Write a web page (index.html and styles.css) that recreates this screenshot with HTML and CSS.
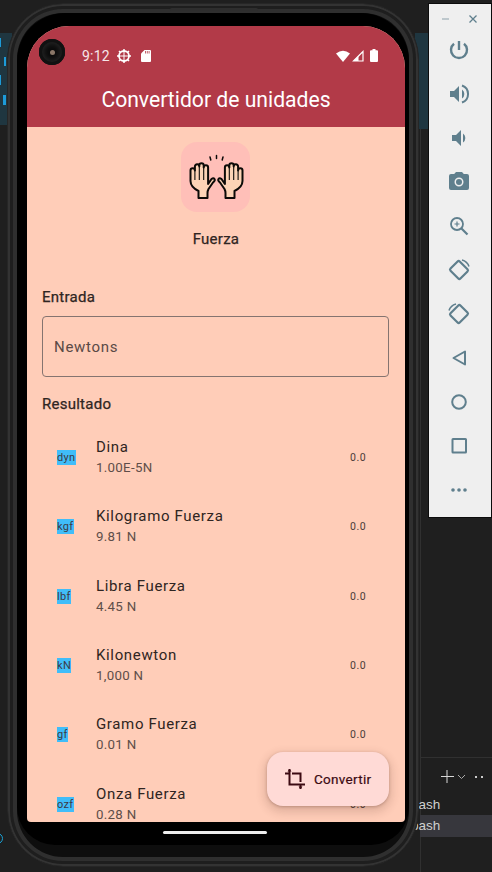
FILE: index.html
```html
<!DOCTYPE html>
<html lang="es">
<head>
<meta charset="utf-8">
<title>Convertidor de unidades</title>
<link rel="stylesheet" href="styles.css">
</head>
<body>
<div class="desktop">
  <div class="editor-left"><span class="c1"></span><span class="c2"></span><span class="c3"></span><span class="c4"></span></div>
  <div class="editor-right"></div>
  <div class="panel-vline"></div>
  <div class="panel-line"></div>
  <svg class="term-tools" width="60" height="20" viewBox="0 0 60 20"><path d="M11 3v13M5 9.500h13" stroke="#d8d8d8" stroke-width="1" fill="none"/><path d="M22 8l3.500 3.500L29 8" stroke="#aaa" stroke-width="1" fill="none"/><rect x="39" y="9" width="2" height="2" fill="#ccc"/><rect x="45" y="9" width="2" height="2" fill="#ccc"/></svg>
  <div class="term-row term-a">bash</div>
  <div class="term-row term-b">bash</div>
  <div class="debug-ring"></div>

  <div class="phone">
    <div class="phone-band"></div>
    <div class="speaker"></div>
    <div class="screen">
      <header class="appbar">
        <div class="status">
          <div class="camera"><span class="lens"></span></div>
          <span class="time">9:12</span>
          <svg class="st-icon" width="14" height="14" viewBox="0 0 14 14"><circle cx="7" cy="7" r="5" fill="none" stroke="#fff" stroke-width="1.800"/><path d="M7 2v10M2 7h10" stroke="#fff" stroke-width="1"/><path d="M7 0v2M7 12v2M0 7h2M12 7h2M2 2l1.500 1.500M12 2l-1.500 1.500M2 12l1.500-1.500M12 12l-1.500-1.500" stroke="#fff" stroke-width="1.500"/></svg>
          <svg class="st-icon sd" width="10" height="12" viewBox="0 0 10 12"><path d="M3.500 0H9a1 1 0 0 1 1 1v10a1 1 0 0 1-1 1H1a1 1 0 0 1-1-1V3.500z" fill="#fff"/><path d="M4.500 1v2.500M6.300 1v2.500M8.100 1v2.500" stroke="#b23a48" stroke-width=".8"/></svg>
          <span class="status-gap"></span>
          <svg width="14" height="12" viewBox="0 0 14 12"><path d="M0 3.500Q7-2 14 3.500L7 12z" fill="#fff"/></svg>
          <svg class="signal" width="12" height="12" viewBox="0 0 12 12"><path d="M11 1.500V11H1.500z" fill="none" stroke="#fff" stroke-width="1.200"/><path d="M6.500 6V11H1.500z" fill="#fff"/></svg>
          <svg class="battery" width="8" height="13" viewBox="0 0 8 13"><path d="M2.500 0h3v1.200H7a1 1 0 0 1 1 1V12a1 1 0 0 1-1 1H1a1 1 0 0 1-1-1V2.200a1 1 0 0 1 1-1h1.500z" fill="#fff"/></svg>
        </div>
        <h1 class="title">Convertidor de unidades</h1>
      </header>
      <main class="content">
        <div class="category">
          <div class="cat-tile">
            <svg width="60" height="50" viewBox="0 0 60 50">
              <g stroke="#0c0a08" stroke-width="1.500" stroke-linecap="round"><path d="M24 5l.8 3M30.500 3.500v3M37 5l-.8 3" fill="none"/></g>
              <g class="hand">
                <path d="M12.500 46V39Q4.500 35 4.500 29V18.500a2.200 2.200 0 0 1 4.400 0V14.500a2.200 2.200 0 0 1 4.400 0V13.500a2.200 2.200 0 0 1 4.400 0V15.500a2.200 2.200 0 0 1 4.400 0V32L25.500 27Q27.500 25.500 28.500 27T27 30.500L22.500 37Q21.500 39 21.500 41V46Z"/>
                <path class="finger" d="M8.900 18V28M13.300 15V28M17.700 15V28"/>
              </g>
              <g class="hand" transform="translate(61 0) scale(-1 1)">
                <path d="M12.500 46V39Q4.500 35 4.500 29V18.500a2.200 2.200 0 0 1 4.400 0V14.500a2.200 2.200 0 0 1 4.400 0V13.500a2.200 2.200 0 0 1 4.400 0V15.500a2.200 2.200 0 0 1 4.400 0V32L25.500 27Q27.500 25.500 28.500 27T27 30.500L22.500 37Q21.500 39 21.500 41V46Z"/>
                <path class="finger" d="M8.900 18V28M13.300 15V28M17.700 15V28"/>
              </g>
            </svg>
          </div>
          <div class="cat-name">Fuerza</div>
        </div>
        <section class="form">
          <div class="label">Entrada</div>
          <div class="input">Newtons</div>
          <div class="label result-label">Resultado</div>
          <ul class="list">
            <li class="row"><span class="abbr"><b>dyn</b></span><div class="names"><div class="name">Dina</div><div class="factor">1.00E-5N</div></div><span class="value">0.0</span></li>
            <li class="row"><span class="abbr"><b>kgf</b></span><div class="names"><div class="name">Kilogramo Fuerza</div><div class="factor">9.81 N</div></div><span class="value">0.0</span></li>
            <li class="row"><span class="abbr"><b>lbf</b></span><div class="names"><div class="name">Libra Fuerza</div><div class="factor">4.45 N</div></div><span class="value">0.0</span></li>
            <li class="row"><span class="abbr"><b>kN</b></span><div class="names"><div class="name">Kilonewton</div><div class="factor">1,000 N</div></div><span class="value">0.0</span></li>
            <li class="row"><span class="abbr"><b>gf</b></span><div class="names"><div class="name">Gramo Fuerza</div><div class="factor">0.01 N</div></div><span class="value">0.0</span></li>
            <li class="row"><span class="abbr"><b>ozf</b></span><div class="names"><div class="name">Onza Fuerza</div><div class="factor">0.28 N</div></div><span class="value">0.0</span></li>
          </ul>
        </section>
        <button class="fab">
          <svg width="20" height="20" viewBox="0 0 20 20"><path d="M4.500 0v4M0 4.500h4.500V15.500H15.500V20M15.500 15.500H20M7 4.500h8.500V13" fill="none" stroke="#3c0a12" stroke-width="2"/><path d="M2.500 2.500L4.500 0l2 2.500z M13.500 17.500l2 2.500 2-2.500z" fill="#3c0a12"/></svg>
          <span>Convertir</span>
        </button>
      </main>
    </div>
    <div class="nav-pill"></div>
  </div>

  <aside class="toolbar">
    <div class="win-controls">
      <svg width="10" height="10" viewBox="0 0 10 10"><path d="M1 5h7" stroke="#a5b4bb" stroke-width="1.300"/></svg>
      <svg width="10" height="10" viewBox="0 0 10 10"><path d="M1.500 1.500l7 7M8.500 1.500l-7 7" stroke="#5f7f8d" stroke-width="1.300"/></svg>
    </div>
    <svg class="tool" viewBox="0 0 24 24"><path d="M12 3v9" stroke-width="2.400"/><path d="M7 5.800a8 8 0 1 0 10 0" stroke-width="2.400"/></svg>
    <svg class="tool" viewBox="0 0 24 24"><path class="fl" d="M3 9v6h4l5 5V4L7 9z"/><path d="M15 7.500a5.500 5.500 0 0 1 0 9z" class="fl"/><path d="M15 3.500a9 9 0 0 1 0 17" stroke-width="2"/></svg>
    <svg class="tool" viewBox="0 0 24 24"><path class="fl" d="M5 9v6h4l5 5V4L9 9z"/><path d="M16 7.500a5.500 5.500 0 0 1 0 9z" class="fl"/></svg>
    <svg class="tool" viewBox="0 0 24 24"><path class="fl" fill-rule="evenodd" d="M9 2L7.200 4H4a2 2 0 0 0-2 2v12a2 2 0 0 0 2 2h16a2 2 0 0 0 2-2V6a2 2 0 0 0-2-2h-3.200L15 2zM12 7.500a4.500 4.500 0 1 1 0 9 4.500 4.500 0 0 1 0-9z"/><circle class="fl" cx="12" cy="12" r="3"/></svg>
    <svg class="tool" viewBox="0 0 24 24"><circle cx="10" cy="10" r="6" stroke-width="1.800"/><path d="M14.500 14.500l6 6" stroke-width="2.200"/><path d="M10 7.500v5M7.500 10h5" stroke-width="1.200"/></svg>
    <svg class="tool" viewBox="0 0 24 24"><rect x="5.500" y="5" width="13" height="14" rx="1.500" transform="rotate(-45 12 12)" stroke-width="2.200"/><path d="M15 2a10 10 0 0 1 7 6.500" stroke-width="1.500"/></svg>
    <svg class="tool" viewBox="0 0 24 24"><rect x="5.500" y="5" width="13" height="14" rx="1.500" transform="rotate(45 12 12)" stroke-width="2.200"/><path d="M9 2a10 10 0 0 0-7 6.500" stroke-width="1.500"/></svg>
    <svg class="tool" viewBox="0 0 24 24"><path d="M18 5.500v13L6.500 12z" stroke-width="2" stroke-linejoin="round"/></svg>
    <svg class="tool" viewBox="0 0 24 24"><circle cx="12" cy="12" r="6.800" stroke-width="2"/></svg>
    <svg class="tool" viewBox="0 0 24 24"><rect x="5.500" y="5" width="13.500" height="13.500" rx=".5" stroke-width="2"/></svg>
    <svg class="tool" viewBox="0 0 24 24"><circle class="fl" cx="6" cy="12" r="1.800"/><circle class="fl" cx="12" cy="12" r="1.800"/><circle class="fl" cx="18" cy="12" r="1.800"/></svg>
  </aside>
</div>
</body>
</html>
```
FILE: styles.css
```css
* { box-sizing: border-box; }
html, body { margin: 0; padding: 0; }
body { background: #1f1f1f; overflow: hidden; font-family: Roboto, "Liberation Sans", sans-serif; }
.desktop { position: relative; width: 492px; height: 872px; overflow: hidden; background: #1f1f1f; }

.editor-left { position: absolute; left: 0; top: 33px; width: 12px; height: 92px; background: #1f3640; }
.editor-left span { position: absolute; background: #1d9bd8; }
.c1 { left: 0; top: 5px; width: 1px; height: 9px; }
.c2 { left: 4px; top: 24px; width: 2px; height: 9px; }
.c3 { left: 0; top: 42px; width: 1px; height: 10px; }
.c4 { left: 3px; top: 62px; width: 3px; height: 10px; }
.editor-right { position: absolute; left: 415px; top: 33px; width: 20px; height: 96px; background: #1f3640; }
.panel-vline { position: absolute; left: 420px; top: 129px; width: 1px; height: 743px; background: #303030; }
.panel-line { position: absolute; left: 420px; top: 757px; width: 72px; height: 1px; background: #303030; }
.term-tools { position: absolute; left: 436px; top: 767px; }
.term-row { position: absolute; left: 420px; width: 72px; height: 22px; color: #cfcfcf; font: 13.500px/22px "Liberation Sans", sans-serif; text-indent: -9px; }
.term-a { top: 794px; }
.term-b { top: 815px; background: #37373d; }
.debug-ring { position: absolute; left: -8px; top: 833px; width: 11px; height: 11px; border: 1px solid #1aa3d8; border-radius: 50%; }

.phone { position: absolute; left: 7px; top: 3px; width: 412px; height: 864px; border-radius: 56px; background: #0e0e0e; border: 1px solid #262626; box-shadow: inset 0 0 0 2px #333, inset 0 0 0 5px #1e1e1e, inset 0 0 0 9px #2f2f2f; }
.phone-band { position: absolute; inset: 9px 9px 21px; border-radius: 48px 48px 38px 38px; background: #000; }
.speaker { position: absolute; left: 162px; top: 4px; width: 88px; height: 3px; border-radius: 2px; background: #2e2e2e; }
.screen { position: absolute; left: 19px; top: 22px; width: 378px; height: 796px; border-radius: 42px 42px 4px 4px; overflow: hidden; background: #ffcdb8; }

.appbar { background: #b23a48; height: 101px; color: #fff; }
.status { position: relative; height: 59px; display: flex; align-items: center; padding: 0 27px 0 55px; font-size: 14px; gap: 5px; }
.camera { position: absolute; left: 12px; top: 13px; width: 26px; height: 26px; border-radius: 50%; background: #0b0b0b; display: flex; align-items: center; justify-content: center; box-shadow: inset 0 0 0 3px #111, inset 0 0 5px 5px #242424; }
.lens { width: 5px; height: 5px; border-radius: 50%; background: #8a7768; }
.time { font-size: 14px; color: #f6e6e8; letter-spacing: .2px; }
.st-icon { margin-left: 2px; }
.sd { margin-left: 5px; }
.status-gap { flex: 1; }
.signal { margin-left: -3px; }
.battery { margin-left: 1px; }
.title { margin: 1px 0 0; text-align: center; font-size: 21.150px; font-weight: 400; line-height: 28px; }

.content { position: relative; height: 695px; overflow: hidden; color: #2f2522; }
.category { display: flex; flex-direction: column; align-items: center; padding-top: 15px; }
.cat-tile { width: 69px; height: 70px; margin-right: 1px; border-radius: 16px; background: #ffbfb8; display: flex; align-items: center; justify-content: center; }
.hand { fill: #fcd3b6; stroke: #0c0a08; stroke-width: 2; stroke-linejoin: round; }
.finger { fill: none; stroke-width: 1.100; }
.cat-name { margin-top: 17px; font-size: 15px; line-height: 20px; letter-spacing: .25px; -webkit-text-stroke: .25px currentColor; }
.form { padding: 38px 16px 0 15px; }
.label { font-size: 15px; line-height: 20px; letter-spacing: .25px; -webkit-text-stroke: .25px currentColor; }
.input { margin-top: 9px; height: 61px; border: 1px solid #857470; border-radius: 4px; padding: 0 11px; display: flex; align-items: center; font-size: 15px; letter-spacing: .7px; color: #5a4a46; }
.result-label { margin-top: 17px; }
.list { list-style: none; margin: 9px 0 0; padding: 0; }
.row { height: 69.300px; display: flex; align-items: center; padding-left: 15px; }
.abbr { width: 39px; flex: none; display: flex; }
.abbr b { background: #40bdf9; color: #3d3a45; font-size: 11px; font-weight: 400; line-height: 15px; letter-spacing: .35px; }
.names { flex: 1; }
.name { font-size: 15px; line-height: 21px; letter-spacing: .65px; color: #2f2522; }
.factor { font-size: 13.300px; line-height: 20px; letter-spacing: .3px; color: #5e4d49; }
.value { width: 39px; flex: none; font-size: 10.500px; letter-spacing: .6px; color: #4c3c38; }

.fab { position: absolute; left: 240px; top: 625px; width: 122px; height: 54px; border: 0; border-radius: 16px; background: #ffdad6; display: flex; align-items: center; gap: 9px; padding: 0 0 0 18px; font-family: inherit; font-size: 13.500px; color: #3c0a12; letter-spacing: .3px; -webkit-text-stroke: .2px currentColor; box-shadow: 0 4px 8px 3px rgba(90,50,40,.16), 0 1px 3px rgba(90,50,40,.3); }

.nav-pill { position: absolute; left: 155px; top: 827px; width: 104px; height: 3px; border-radius: 2px; background: #eee; }

.toolbar { position: absolute; left: 428px; top: 3px; width: 64px; height: 515px; background: #efefef; border: 1px solid #0c0c0c; display: flex; flex-direction: column; align-items: center; gap: 20px; padding: 10px 2px 0 0; }
.win-controls { width: 100%; display: flex; justify-content: center; gap: 17px; height: 10px; margin-bottom: -6px; }
.tool { width: 24px; height: 24px; flex: none; fill: none; stroke: #5f7f8d; }
.tool .fl { fill: #5f7f8d; stroke: none; }
```
